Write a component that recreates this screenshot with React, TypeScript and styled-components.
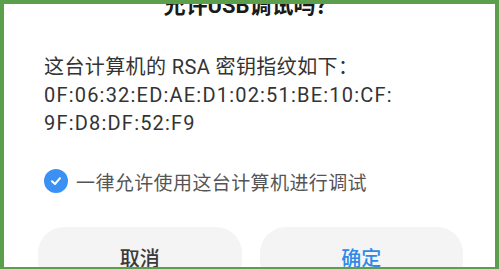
import React, { useState } from 'react';
import styled, { createGlobalStyle } from 'styled-components';

const GlobalStyle = createGlobalStyle`
  html, body {
    margin: 0;
    padding: 0;
    background: #5b9f4c;
  }
  body {
    font-family: Roboto, "Noto Sans CJK SC", "Noto Sans", sans-serif;
  }
`;

const Frame = styled.div`
  box-sizing: border-box;
  width: 499px;
  height: 269px;
  padding: 4px 4px 2px 4px;
  background: #5b9f4c;
`;

const Sheet = styled.div`
  height: 100%;
  background: #ffffff;
  overflow: hidden;
  display: flex;
  flex-direction: column;
  padding: 0 32px 0 34px;
`;

const Title = styled.div`
  margin-top: -13px;
  height: 30px;
  line-height: 30px;
  font-size: 22px;
  font-weight: 700;
  color: #1a1a1a;
  text-align: center;
`;

const Message = styled.div`
  margin-top: 32px;
  padding-left: 6px;
  font-size: 20px;
  line-height: 28px;
  color: #333333;
`;

const Plain = styled.div`
  letter-spacing: 0.4px;
`;

const Hex = styled.div`
  letter-spacing: 1.2px;
`;

const CheckRow = styled.label`
  margin-top: 32px;
  padding-left: 6px;
  display: flex;
  align-items: center;
  gap: 8px;
  height: 24px;
  font-size: 19px;
  letter-spacing: 0.4px;
  color: #555555;
  cursor: pointer;
`;

const CheckDot = styled.span<{ $on: boolean }>`
  width: 24px;
  height: 24px;
  border-radius: 50%;
  background: ${(p) => (p.$on ? '#3b91f3' : '#d8d8d8')};
  display: flex;
  align-items: center;
  justify-content: center;
  flex-shrink: 0;
`;

const Buttons = styled.div`
  margin-top: 34px;
  display: grid;
  grid-template-columns: 1fr 1fr;
  gap: 18px;
`;

const Btn = styled.button<{ $primary?: boolean }>`
  height: 60px;
  border: none;
  border-radius: 26px;
  background: #f4f4f4;
  font-family: inherit;
  font-size: 20px;
  font-weight: 500;
  color: ${(p) => (p.$primary ? '#2d8ae8' : '#3a3a3a')};
  padding: 0;
`;

const App = () => {
  const [always, setAlways] = useState(true);

  return (
    <>
      <GlobalStyle />
      <Frame>
        <Sheet>
          <Title>允许USB调试吗？</Title>
          <Message>
            <Plain>这台计算机的 RSA 密钥指纹如下：</Plain>
            <Hex>0F:06:32:ED:AE:D1:02:51:BE:10:CF:</Hex>
            <Hex>9F:D8:DF:52:F9</Hex>
          </Message>
          <CheckRow onClick={() => setAlways(!always)}>
            <CheckDot $on={always}>
              <svg width="14" height="14" viewBox="0 0 14 14">
                <path d="M3 7.2 L6 10 L11 4.2" fill="none" stroke="#fff" strokeWidth="2" strokeLinecap="round" strokeLinejoin="round" />
              </svg>
            </CheckDot>
            一律允许使用这台计算机进行调试
          </CheckRow>
          <Buttons>
            <Btn>取消</Btn>
            <Btn $primary>确定</Btn>
          </Buttons>
        </Sheet>
      </Frame>
    </>
  );
};

export default App;
